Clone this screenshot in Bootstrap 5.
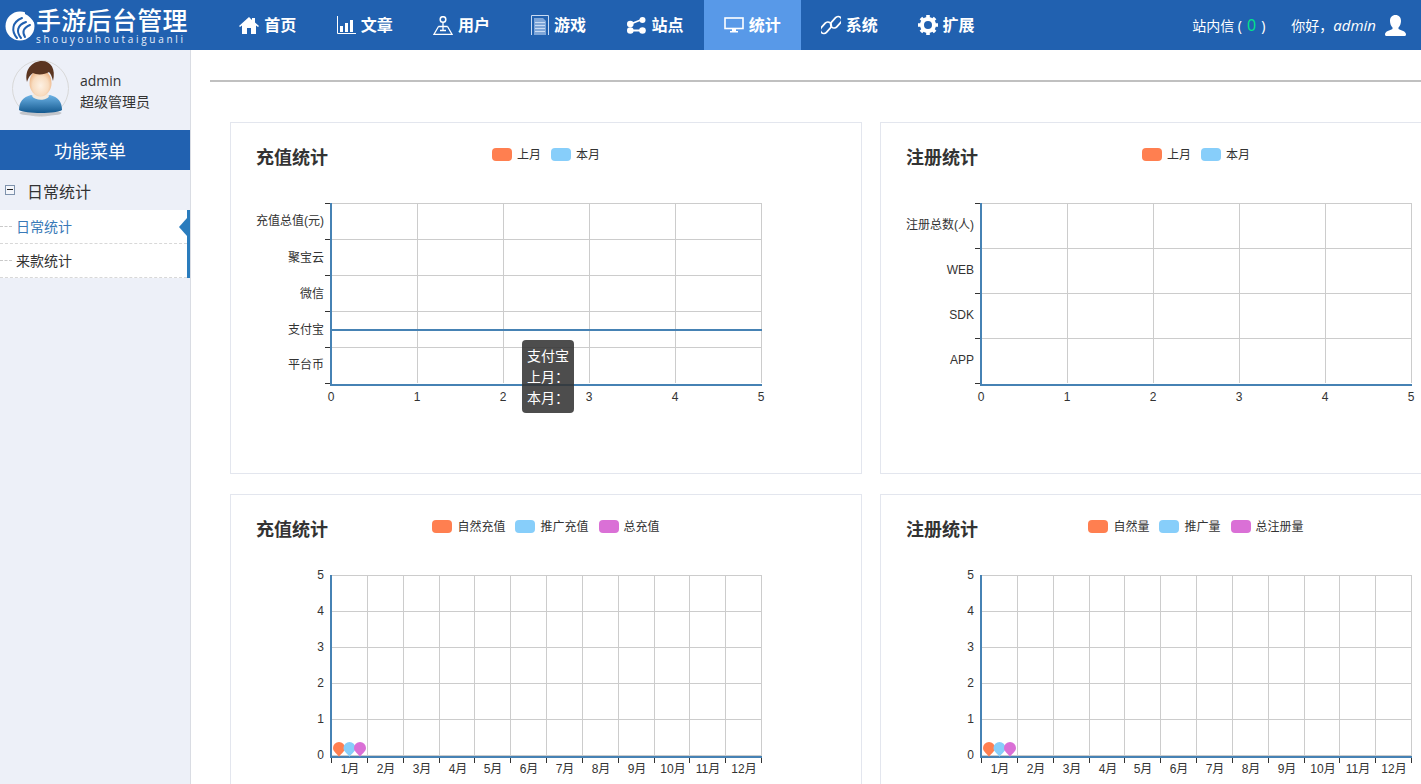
<!DOCTYPE html>
<html lang="zh-CN">
<head>
<meta charset="utf-8">
<title>手游后台管理</title>
<link rel="stylesheet" href="https://cdn.jsdelivr.net/npm/bootstrap@5.3.0/dist/css/bootstrap.min.css">
<style>
html,body{height:100%;overflow:hidden}
body{font-family:"Noto Sans","Noto Sans CJK SC",sans-serif;font-size:14px;color:#333;background:#fff}
.topbar{height:50px;background:#2161b0;flex:none;padding:0!important;flex-wrap:nowrap!important;justify-content:flex-start!important}
.brand{width:219.4px;height:50px;flex:none;padding-left:5px;color:#fff}
.brand-logo{margin-top:1px}
.brand-text{margin-left:1px;line-height:1;margin-top:3px}
.brand-cn{font-size:25px;font-weight:500;letter-spacing:.3px;line-height:24px;display:block;white-space:nowrap}
.brand-en{font-size:10px;letter-spacing:2.7px;line-height:11px;margin-top:2px;display:block;color:#e6eefa;font-family:"Open Sans",sans-serif;white-space:nowrap}
.topnav .nav-link{width:96.9px;height:50px;padding:0;gap:5px;color:#fff;font-size:16px;font-weight:700;white-space:nowrap}
.topnav .nav-link.active{background:#5899e8;color:#fff}
.top-right{color:#fff;font-size:14px;padding-right:15px;white-space:nowrap}
.top-right em{font-family:"Open Sans",sans-serif;font-size:15px}
.msg-num{color:#00e68a;font-family:"Open Sans",sans-serif;font-size:16px;margin:0 5px}
.hello{margin-left:26px}
.who-icon{margin-left:9px}
.sidebar{width:191px;flex:none;background:#edf0f8;border-right:1px solid #d9dce3}
.profile{height:80px;padding:10px 0 0 12px;gap:11px}
.profile-text{padding-top:10px}
.profile-name{font-family:"Open Sans",sans-serif;font-size:14px;line-height:21px;color:#333}
.profile-role{font-size:14px;line-height:21px;color:#333}
.menu-title{height:40px;background:#2161b0;color:#fff;font-size:18px;line-height:43px;text-align:center;padding-right:10px}
.menu-group{height:40px;padding:3px 0 0 5px;gap:12px;font-size:16px;color:#333}
.minus-box{width:10px;height:10px;border:1px solid #7f93ad;position:relative;background:#f4f6fb;margin-top:-3px}
.minus-box::after{content:"";position:absolute;left:1px;right:1px;top:3px;height:1px;background:#222}
.submenu{background:#fff;border-right:3px solid #2a7cbd;position:relative}
.subitem{height:34px;border-bottom:1px dashed #d8d8d8;padding-left:16px;position:relative;font-size:14px;color:#333}
.subitem::before{content:"";position:absolute;left:0;width:12px;top:16px;border-top:1px dashed #c9c9c9}
.subitem.current{color:#3a7ab8}
.subitem.current::after{content:"";position:absolute;right:0;top:8px;border:9px solid transparent;border-left:0;border-right:8px solid #2a7cbd}
.content{min-width:0;padding:30px 0 0 19px;overflow:hidden}
.rule{height:2px;background:#c0c0c0;margin-bottom:40px}
.card-row{padding-left:20px;gap:18px;margin-bottom:20px;flex-wrap:nowrap}
.stat-card{width:632px;height:352px;flex:none;border:1px solid #e3e6ee;border-radius:0;position:relative}
.stat-head{display:grid;grid-template-columns:1fr auto 1fr;height:59px}
.stat-title{font-size:18px;font-weight:700;color:#333;line-height:24px;padding:22px 0 0 25px;margin:0}
.legend-row{gap:10px;padding-top:25px;height:39px;font-size:12px;line-height:14px;color:#333;white-space:nowrap}
.swatch{width:20px;height:13px;border-radius:4px;margin-right:5px;flex:none}
.c-coral{background:#ff7f50}.c-sky{background:#87cefa}.c-orchid{background:#da70d6}
.chart{display:block}
.chart text{font-family:"Liberation Sans","Noto Sans CJK SC",sans-serif;font-size:12px;fill:#333;dominant-baseline:central}
.chart .yl{text-anchor:end}
.chart .xl{text-anchor:middle}
.grid-l{stroke:#ccc;fill:none;stroke-width:1}
.axis-l{stroke:#4682b4;fill:none;stroke-width:2}
.tick-l{stroke:#333;fill:none;stroke-width:1}
.chart-tip{position:absolute;left:291px;top:217px;width:52px;height:73px;background:rgba(50,50,50,.87);color:#fff;border-radius:4px;padding:5px;font-size:14px;line-height:21px;white-space:nowrap}
</style>
</head>
<body class="d-flex flex-column">
<nav class="navbar topbar">
  <div class="brand d-flex align-items-center">
    <svg class="brand-logo" width="30" height="30" viewBox="0 0 30 30"><circle cx="15" cy="15" r="14.500" fill="#fff"/><path d="M20 0H30V13C27 8 24 4.500 20 3z" fill="#2161b0"/><g fill="none" stroke="#2161b0" stroke-width="2" stroke-linecap="round"><path d="M12 27C6 20 7 11 17 7"/><path d="M16 27C11 21 12 14 21 11"/><path d="M20 26C17 21 18 17 25 14"/></g></svg>
    <div class="brand-text"><span class="brand-cn">手游后台管理</span><span class="brand-en">shouyouhoutaiguanli</span></div>
  </div>
  <ul class="nav topnav flex-nowrap">
    <li class="nav-item"><a class="nav-link d-flex align-items-center justify-content-center" href="#"><svg width="20" height="17" viewBox="0 0 20 17"><path d="M10 0 0 9l1 1 2-1.6V17h5v-6h4v6h5V8.400L19 10l1-1-4-3.600V1h-3v2z" fill="#fff"/></svg>首页</a></li>
    <li class="nav-item"><a class="nav-link d-flex align-items-center justify-content-center" href="#"><svg width="19" height="18" viewBox="0 0 19 18"><path d="M.5 0v17.500H19" fill="none" stroke="#fff"/><path d="M3 10h3v6H3zM8 7h3v9H8zM13 4h3v12h-3z" fill="#fff"/></svg>文章</a></li>
    <li class="nav-item"><a class="nav-link d-flex align-items-center justify-content-center" href="#"><svg width="20" height="19" viewBox="0 0 20 19"><circle cx="10" cy="3.500" r="2.800" fill="none" stroke="#fff" stroke-width="1.500"/><path d="M10 6v8M5.500 10.500h9M5.500 10.500 1 18.300h18l-4.500-7.800M7 14.500h6" fill="none" stroke="#fff" stroke-width="1.300"/></svg>用户</a></li>
    <li class="nav-item"><a class="nav-link d-flex align-items-center justify-content-center" href="#"><svg width="18" height="20" viewBox="0 0 18 20"><path d="M.5 20V.5h17V20" fill="none" stroke="#c8daf2"/><path d="M3 3h9l3 3v14H3z" fill="#7fa6d8"/><path d="M4 7h10v1H4zM4 10h10v1H4zM4 13h10v1H4zM4 16h10v1H4z" fill="#c9dcf4"/></svg>游戏</a></li>
    <li class="nav-item"><a class="nav-link d-flex align-items-center justify-content-center" href="#"><svg width="19" height="17" viewBox="0 0 19 17"><path d="M3.500 7 15 2.500M3.500 13.500H15" stroke="#fff" stroke-width="1.800" fill="none"/><circle cx="15.500" cy="3" r="3" fill="#fff"/><circle cx="3.300" cy="7" r="3.300" fill="#fff"/><circle cx="3.300" cy="13.500" r="3.300" fill="#fff"/><circle cx="15.500" cy="13.500" r="3.300" fill="#fff"/></svg>站点</a></li>
    <li class="nav-item"><a class="nav-link active d-flex align-items-center justify-content-center" href="#"><svg width="20" height="16" viewBox="0 0 20 16"><rect x="1" y="1" width="18" height="10.500" fill="none" stroke="#fff" stroke-width="1.600"/><path d="M8 12h4v2h2v1.500H6V14h2z" fill="#fff"/></svg>统计</a></li>
    <li class="nav-item"><a class="nav-link d-flex align-items-center justify-content-center" href="#"><svg width="20" height="20" viewBox="0 0 20 20"><g fill="none" stroke="#fff" stroke-width="1.700" transform="rotate(-48 10 10)"><rect x="-2" y="4.500" width="13" height="7" rx="3.500"/><rect x="9" y="8.500" width="13" height="7" rx="3.500"/></g></svg>系统</a></li>
    <li class="nav-item"><a class="nav-link d-flex align-items-center justify-content-center" href="#"><svg width="20" height="20" viewBox="0 0 20 20"><circle cx="10" cy="10" r="6" fill="none" stroke="#fff" stroke-width="4"/><g stroke="#fff" stroke-width="3.600"><path d="M10 0v4M10 16v4M0 10h4M16 10h4M2.900 2.900l2.800 2.800M14.300 14.300l2.800 2.800M17.100 2.900l-2.800 2.800M5.700 14.300l-2.800 2.800"/></g></svg>扩展</a></li>
  </ul>
  <div class="top-right ms-auto d-flex align-items-center">
    <span>站内信 (<span class="msg-num">0</span>)</span>
    <span class="hello">你好，<em>admin</em></span>
    <svg class="who-icon" width="21" height="21" viewBox="0 0 21 21"><path d="M10.500 0c3.500 0 5.500 2.500 5.500 6 0 2.500-1 5-2.500 6.500v1.500c2.500 1.500 7.500 2 7.500 5.500 0 .8-.5 1.500-1.500 1.500H1.500C.5 21 0 20.300 0 19.500 0 16 5 15.500 7.500 14v-1.500C6 11 5 8.500 5 6c0-3.500 2-6 5.500-6z" fill="#fff"/></svg>
  </div>
</nav>
<div class="d-flex flex-grow-1" style="min-height:0">
  <aside class="sidebar">
    <div class="profile d-flex">
      <svg width="57" height="57" viewBox="0 0 57 57">
        <defs>
          <linearGradient id="shirt" x1="0" y1="0" x2="0" y2="1"><stop offset="0" stop-color="#6db3e6"/><stop offset="1" stop-color="#14598f"/></linearGradient>
          <radialGradient id="skin" cx=".5" cy=".6" r=".6"><stop offset="0" stop-color="#fdf1e4"/><stop offset=".6" stop-color="#f8dcc0"/><stop offset="1" stop-color="#e9ab78"/></radialGradient>
        </defs>
        <circle cx="28.500" cy="28.500" r="28" fill="#edf0f8" stroke="#d8d8d8"/>
        <ellipse cx="28.500" cy="53" rx="21" ry="3" fill="#c3c5ca"/>
        <path d="M7 50c0-8 4-13 12-15l9 3 10-3c8 2 12 7 12 15-5 4-37 4-43 0z" fill="url(#shirt)"/>
        <path d="M20 36c3 5 15 5 17 0l-3-4H23z" fill="#f4e9dc"/>
        <ellipse cx="28.500" cy="23" rx="11" ry="13.500" fill="url(#skin)"/>
        <path d="M15 22C12 10 20 1 30 1c9 0 14 8 11 20-1-4-2-7-4-9-4 3-13 3-16 1-3 2-5 5-6 9z" fill="#5b3520"/>
      </svg>
      <div class="profile-text"><div class="profile-name">admin</div><div class="profile-role">超级管理员</div></div>
    </div>
    <div class="menu-title">功能菜单</div>
    <div class="menu-group d-flex align-items-center"><span class="minus-box"></span><span>日常统计</span></div>
    <div class="submenu">
      <div class="subitem current d-flex align-items-center">日常统计</div>
      <div class="subitem d-flex align-items-center">来款统计</div>
    </div>
  </aside>
  <main class="content flex-grow-1">
    <div class="rule"></div>
    <div class="d-flex card-row">
      <section class="card stat-card">
        <div class="stat-head"><h2 class="stat-title">充值统计</h2>
          <div class="legend-row d-flex"><span class="d-flex"><i class="swatch c-coral"></i>上月</span><span class="d-flex"><i class="swatch c-sky"></i>本月</span></div><div></div></div>
        <svg class="chart" width="630" height="290" viewBox="0 0 630 290">
          <path class="grid-l" d="M100.500 21v180M186.500 21v180M272.500 21v180M358.500 21v180M444.500 21v180M530.500 21v180M100 21.500h430M100 57.500h430M100 93.500h430M100 129.500h430M100 165.500h430"/>
          <path class="tick-l" d="M94 21.500h6M94 57.500h6M94 93.500h6M94 129.500h6M94 165.500h6M94 201.500h6"/>
          <path class="axis-l" d="M100 21v182h431M100 148h431"/>
          <text class="yl" x="93" y="39">充值总值(元)</text><text class="yl" x="93" y="76">聚宝云</text><text class="yl" x="93" y="112">微信</text><text class="yl" x="93" y="148">支付宝</text><text class="yl" x="93" y="183">平台币</text>
          <text class="xl" x="100" y="215">0</text><text class="xl" x="186" y="215">1</text><text class="xl" x="272" y="215">2</text><text class="xl" x="358" y="215">3</text><text class="xl" x="444" y="215">4</text><text class="xl" x="530" y="215">5</text>
        </svg>
        <div class="chart-tip">支付宝<br>上月：<br>本月：</div>
      </section>
      <section class="card stat-card">
        <div class="stat-head"><h2 class="stat-title">注册统计</h2>
          <div class="legend-row d-flex"><span class="d-flex"><i class="swatch c-coral"></i>上月</span><span class="d-flex"><i class="swatch c-sky"></i>本月</span></div><div></div></div>
        <svg class="chart" width="630" height="290" viewBox="0 0 630 290">
          <path class="grid-l" d="M100.500 21v180M186.500 21v180M272.500 21v180M358.500 21v180M444.500 21v180M530.500 21v180M100 21.500h430M100 66.500h430M100 111.500h430M100 156.500h430"/>
          <path class="tick-l" d="M94 21.500h6M94 66.500h6M94 111.500h6M94 156.500h6M94 201.500h6"/>
          <path class="axis-l" d="M100 21v182h431"/>
          <text class="yl" x="93" y="43">注册总数(人)</text><text class="yl" x="93" y="88">WEB</text><text class="yl" x="93" y="133">SDK</text><text class="yl" x="93" y="178">APP</text>
          <text class="xl" x="100" y="215">0</text><text class="xl" x="186" y="215">1</text><text class="xl" x="272" y="215">2</text><text class="xl" x="358" y="215">3</text><text class="xl" x="444" y="215">4</text><text class="xl" x="530" y="215">5</text>
        </svg>
      </section>
    </div>
    <div class="d-flex card-row">
      <section class="card stat-card">
        <div class="stat-head"><h2 class="stat-title">充值统计</h2>
          <div class="legend-row d-flex"><span class="d-flex"><i class="swatch c-coral"></i>自然充值</span><span class="d-flex"><i class="swatch c-sky"></i>推广充值</span><span class="d-flex"><i class="swatch c-orchid"></i>总充值</span></div><div></div></div>
        <svg class="chart" width="630" height="290" viewBox="0 0 630 290">
          <path class="grid-l" d="M136.500 21v181M172.500 21v181M208.500 21v181M243.500 21v181M279.500 21v181M315.500 21v181M351.500 21v181M387.500 21v181M423.500 21v181M458.500 21v181M494.500 21v181M530.500 21v181M100 21.500h430M100 57.500h430M100 93.500h430M100 129.500h430M100 165.500h430M100 201.500h430"/>
          <path class="tick-l" d="M100.500 204v5M136.500 204v5M172.500 204v5M208.500 204v5M243.500 204v5M279.500 204v5M315.500 204v5M351.500 204v5M387.500 204v5M423.500 204v5M458.500 204v5M494.500 204v5M530.500 204v5"/>
          <path class="axis-l" d="M100 21v182h431"/>
          <text class="yl" x="93" y="21">5</text><text class="yl" x="93" y="57">4</text><text class="yl" x="93" y="93">3</text><text class="yl" x="93" y="129">2</text><text class="yl" x="93" y="165">1</text><text class="yl" x="93" y="201">0</text>
          <text class="xl" x="119" y="215">1月</text><text class="xl" x="155" y="215">2月</text><text class="xl" x="191" y="215">3月</text><text class="xl" x="227" y="215">4月</text><text class="xl" x="262" y="215">5月</text><text class="xl" x="298" y="215">6月</text><text class="xl" x="334" y="215">7月</text><text class="xl" x="370" y="215">8月</text><text class="xl" x="406" y="215">9月</text><text class="xl" x="442" y="215">10月</text><text class="xl" x="477" y="215">11月</text><text class="xl" x="513" y="215">12月</text>
          <path fill="#ff7f50" d="M108 203c-1-3-6-5-6-9a6 6 0 0 1 12 0c0 4-5 6-6 9z"/>
          <path fill="#87cefa" d="M118.500 203c-1-3-6-5-6-9a6 6 0 0 1 12 0c0 4-5 6-6 9z"/>
          <path fill="#da70d6" d="M129 203c-1-3-6-5-6-9a6 6 0 0 1 12 0c0 4-5 6-6 9z"/>
        </svg>
      </section>
      <section class="card stat-card">
        <div class="stat-head"><h2 class="stat-title">注册统计</h2>
          <div class="legend-row d-flex"><span class="d-flex"><i class="swatch c-coral"></i>自然量</span><span class="d-flex"><i class="swatch c-sky"></i>推广量</span><span class="d-flex"><i class="swatch c-orchid"></i>总注册量</span></div><div></div></div>
        <svg class="chart" width="630" height="290" viewBox="0 0 630 290">
          <path class="grid-l" d="M136.500 21v181M172.500 21v181M208.500 21v181M243.500 21v181M279.500 21v181M315.500 21v181M351.500 21v181M387.500 21v181M423.500 21v181M458.500 21v181M494.500 21v181M530.500 21v181M100 21.500h430M100 57.500h430M100 93.500h430M100 129.500h430M100 165.500h430M100 201.500h430"/>
          <path class="tick-l" d="M100.500 204v5M136.500 204v5M172.500 204v5M208.500 204v5M243.500 204v5M279.500 204v5M315.500 204v5M351.500 204v5M387.500 204v5M423.500 204v5M458.500 204v5M494.500 204v5M530.500 204v5"/>
          <path class="axis-l" d="M100 21v182h431"/>
          <text class="yl" x="93" y="21">5</text><text class="yl" x="93" y="57">4</text><text class="yl" x="93" y="93">3</text><text class="yl" x="93" y="129">2</text><text class="yl" x="93" y="165">1</text><text class="yl" x="93" y="201">0</text>
          <text class="xl" x="119" y="215">1月</text><text class="xl" x="155" y="215">2月</text><text class="xl" x="191" y="215">3月</text><text class="xl" x="227" y="215">4月</text><text class="xl" x="262" y="215">5月</text><text class="xl" x="298" y="215">6月</text><text class="xl" x="334" y="215">7月</text><text class="xl" x="370" y="215">8月</text><text class="xl" x="406" y="215">9月</text><text class="xl" x="442" y="215">10月</text><text class="xl" x="477" y="215">11月</text><text class="xl" x="513" y="215">12月</text>
          <path fill="#ff7f50" d="M108 203c-1-3-6-5-6-9a6 6 0 0 1 12 0c0 4-5 6-6 9z"/>
          <path fill="#87cefa" d="M118.500 203c-1-3-6-5-6-9a6 6 0 0 1 12 0c0 4-5 6-6 9z"/>
          <path fill="#da70d6" d="M129 203c-1-3-6-5-6-9a6 6 0 0 1 12 0c0 4-5 6-6 9z"/>
        </svg>
      </section>
    </div>
  </main>
</div>
<script src="https://cdn.jsdelivr.net/npm/bootstrap@5.3.0/dist/js/bootstrap.bundle.min.js"></script>
</body>
</html>
